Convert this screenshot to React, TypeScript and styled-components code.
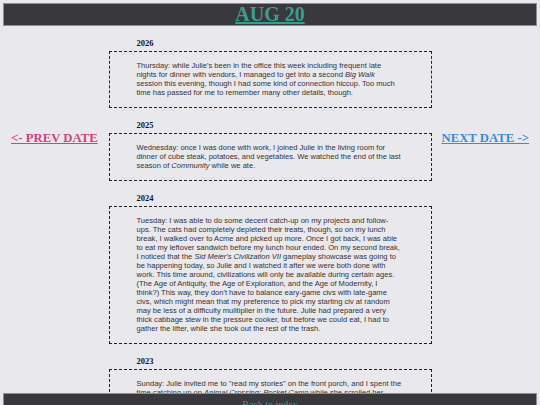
import React from "react";
import styled, { createGlobalStyle } from "styled-components";

const GlobalStyle = createGlobalStyle`
  html {
    scrollbar-width: none;
  }
  html::-webkit-scrollbar {
    display: none;
  }
  body {
    margin: 0;
    background: #e9e8ed;
    font-family: "Liberation Serif", "Times New Roman", serif;
  }
`;

const Header = styled.header`
  box-sizing: border-box;
  margin: 3px 3px 0;
  height: 23px;
  border: 1px solid #8f8f93;
  background: #39383d;
  text-align: center;
`;

const Title = styled.a`
  font-family: "Liberation Serif", "Times New Roman", serif;
  font-weight: bold;
  font-size: 20px;
  line-height: 21px;
  color: #3b9c92;
  text-decoration: underline;
`;

const Layout = styled.main`
  display: grid;
  grid-template-columns: 1fr 323px 1fr;
  padding: 0 11px 40px;
`;

const SideNav = styled.nav<{ $align: "start" | "end" }>`
  display: flex;
  justify-content: ${(p) => (p.$align === "start" ? "flex-start" : "flex-end")};
  align-items: flex-start;
  padding-top: 105.3px;
`;

const NavLink = styled.a<{ $tone: "prev" | "next" }>`
  font-family: "Liberation Serif", "Times New Roman", serif;
  font-weight: bold;
  font-size: 12.75px;
  white-space: nowrap;
  color: ${(p) => (p.$tone === "prev" ? "#d2437f" : "#3a8dd2")};
  text-decoration: underline;
`;

const Entries = styled.section`
  display: flex;
  flex-direction: column;
  gap: 12px;
  padding-top: 11.5px;
`;

const Entry = styled.article`
  display: flex;
  flex-direction: column;
`;

const Year = styled.h3`
  margin: 0 0 3px 28px;
  font-family: "Liberation Serif", "Times New Roman", serif;
  font-weight: bold;
  font-size: 8.5px;
  color: #161616;
`;

const EntryBox = styled.div`
  box-sizing: border-box;
  width: 323px;
  border: 1px dashed #222;
  padding: 9.5px 28.6px 9.5px 27px;
`;

const EntryText = styled.p`
  margin: 0;
  font-family: "Liberation Sans", Arial, sans-serif;
  font-size: 7.55px;
  line-height: 9px;
  color: #333;
`;

const Footer = styled.footer`
  position: fixed;
  left: 3px;
  right: 3px;
  bottom: 0;
  box-sizing: border-box;
  height: 12px;
  border: 1px solid #8f8f93;
  border-bottom: none;
  background: #39383d;
  text-align: center;
`;

const BackLink = styled.a`
  font-family: "Liberation Serif", "Times New Roman", serif;
  font-size: 10px;
  line-height: 10px;
  color: #3b9c92;
  text-decoration: underline;
`;

type Day = { year: string; body: React.ReactNode };

const days: Day[] = [
  {
    year: "2026",
    body: (
      <>
        Thursday: while Julie's been in the office this week including frequent late nights
        for dinner with vendors, I managed to get into a second <i>Big Walk</i> session this
        evening, though I had some kind of connection hiccup. Too much time has passed for me
        to remember many other details, though.
      </>
    ),
  },
  {
    year: "2025",
    body: (
      <>
        Wednesday: once I was done with work, I joined Julie in the living room for dinner of
        cube steak, potatoes, and vegetables. We watched the end of the last season of{" "}
        <i>Community</i> while we ate.
      </>
    ),
  },
  {
    year: "2024",
    body: (
      <>
        Tuesday: I was able to do some decent catch-up on my projects and follow-ups. The cats
        had completely depleted their treats, though, so on my lunch break, I walked over to
        Acme and picked up more. Once I got back, I was able to eat my leftover sandwich before
        my lunch hour ended. On my second break, I noticed that the{" "}
        <i>Sid Meier's Civilization VII</i> gameplay showcase was going to be happening today,
        so Julie and I watched it after we were both done with work. This time around,
        civilizations will only be available during certain ages. (The Age of Antiquity, the
        Age of Exploration, and the Age of Modernity, I think?) This way, they don't have to
        balance eary-game civs with late-game civs, which might mean that my preference to pick
        my starting civ at random may be less of a difficulty mulitiplier in the future. Julie
        had prepared a very thick cabbage stew in the pressure cooker, but before we could eat,
        I had to gather the litter, while she took out the rest of the trash.
      </>
    ),
  },
  {
    year: "2023",
    body: (
      <>
        Sunday: Julie invited me to "read my stories" on the front porch, and I spent the time
        catching up on <i>Animal Crossing: Pocket Camp</i> while she scrolled her phone. Later
        on, we headed back inside and put together a simple dinner.
      </>
    ),
  },
];

export default function App() {
  return (
    <>
      <GlobalStyle />
      <Header>
        <Title href="#">AUG 20</Title>
      </Header>
      <Layout>
        <SideNav $align="start">
          <NavLink href="#" $tone="prev">
            &lt;- PREV DATE
          </NavLink>
        </SideNav>
        <Entries>
          {days.map((d) => (
            <Entry key={d.year}>
              <Year>{d.year}</Year>
              <EntryBox>
                <EntryText>{d.body}</EntryText>
              </EntryBox>
            </Entry>
          ))}
        </Entries>
        <SideNav $align="end">
          <NavLink href="#" $tone="next">
            NEXT DATE -&gt;
          </NavLink>
        </SideNav>
      </Layout>
      <Footer>
        <BackLink href="#">Back to index</BackLink>
      </Footer>
    </>
  );
}
